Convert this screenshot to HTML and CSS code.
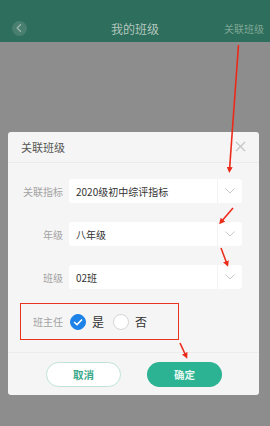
FILE: index.html
```html
<!DOCTYPE html>
<html lang="zh-CN">
<head>
    <meta charset="UTF-8">
    <meta name="viewport" content="width=device-width, initial-scale=1.0">
    <title>我的班级</title>
    <link rel="stylesheet" href="styles.css">
</head>
<body>
    <div class="page">
        <!-- Top bar -->
        <div class="topbar">
            <div class="back">
                <svg width="16" height="16" viewBox="0 0 16 16"><path d="M9.5 4 L5.5 8 L9.5 12" fill="none" stroke="#9fb8ad" stroke-width="1.3"/></svg>
            </div>
            <div class="topbar-title">我的班级</div>
            <div class="topbar-link">关联班级</div>
        </div>

        <!-- Dialog -->
        <div class="dialog">
            <div class="dialog-head">
                <span class="dialog-title">关联班级</span>
                <svg class="close" width="11" height="11" viewBox="0 0 11 11"><path d="M1 1 L10 10 M10 1 L1 10" stroke="#c4c4c4" stroke-width="1.2"/></svg>
            </div>
            <div class="dialog-body">
                <div class="form-row">
                    <label>关联指标</label>
                    <div class="select">
                        <span class="select-text">2020级初中综评指标</span>
                        <span class="select-arrow"><svg width="10" height="6" viewBox="0 0 10 6"><path d="M0.5 0.5 L5 5 L9.5 0.5" fill="none" stroke="#c8c8c8" stroke-width="1"/></svg></span>
                    </div>
                </div>
                <div class="form-row">
                    <label>年级</label>
                    <div class="select">
                        <span class="select-text">八年级</span>
                        <span class="select-arrow"><svg width="10" height="6" viewBox="0 0 10 6"><path d="M0.5 0.5 L5 5 L9.5 0.5" fill="none" stroke="#c8c8c8" stroke-width="1"/></svg></span>
                    </div>
                </div>
                <div class="form-row">
                    <label>班级</label>
                    <div class="select">
                        <span class="select-text">02班</span>
                        <span class="select-arrow"><svg width="10" height="6" viewBox="0 0 10 6"><path d="M0.5 0.5 L5 5 L9.5 0.5" fill="none" stroke="#c8c8c8" stroke-width="1"/></svg></span>
                    </div>
                </div>
                <div class="radio-row">
                    <span class="radio-label">班主任</span>
                    <span class="radio checked">
                        <svg width="10" height="8" viewBox="0 0 10 8"><path d="M1 4 L4 6.6 L9 1.4" fill="none" stroke="#fff" stroke-width="1.5"/></svg>
                    </span>
                    <span class="radio-text">是</span>
                    <span class="radio"></span>
                    <span class="radio-text">否</span>
                </div>
            </div>
            <div class="dialog-foot">
                <button class="btn btn-cancel">取消</button>
                <button class="btn btn-ok">确定</button>
            </div>
        </div>

        <!-- Annotation arrows -->
        <svg class="marks" width="270" height="426" viewBox="0 0 270 426">
            <defs>
                <marker id="head" markerWidth="6" markerHeight="6" refX="3" refY="3" orient="auto" markerUnits="userSpaceOnUse">
                    <path d="M0 0 L6 3 L0 6 Z" fill="#ec2a1a"/>
                </marker>
            </defs>
            <g stroke="#ec2a1a" stroke-width="1.6" fill="none" marker-end="url(#head)">
                <line x1="238.5" y1="45" x2="229.5" y2="170"/>
                <line x1="233" y1="208" x2="221" y2="222"/>
                <line x1="221" y1="248" x2="227" y2="264"/>
                <line x1="180" y1="343" x2="186" y2="356"/>
            </g>
        </svg>
    </div>
</body>
</html>
```

FILE: styles.css
```css
* {
    margin: 0;
    padding: 0;
    box-sizing: border-box;
    font-family: "Noto Sans CJK SC", "Noto Sans", sans-serif;
}

body {
    background-color: #8d8d8d;
    width: 270px;
    height: 426px;
    overflow: hidden;
}

.page {
    position: relative;
    width: 270px;
    height: 426px;
}

.topbar {
    height: 42px;
    background-color: #2e6e5c;
    display: flex;
    align-items: center;
    padding: 14px 6px 0 12px;
    position: relative;
}

.back {
    width: 15px;
    height: 15px;
    border-radius: 50%;
    background-color: #487f6f;
    display: flex;
    align-items: center;
    justify-content: center;
}

.topbar-title {
    position: absolute;
    left: 0;
    right: 0;
    top: 20px;
    text-align: center;
    font-size: 12px;
    color: #b3c6bf;
    line-height: 18px;
}

.topbar-link {
    margin-left: auto;
    font-size: 10px;
    color: #7ea696;
}

.dialog {
    margin: 90px 11px 0 8px;
    height: 263px;
    background-color: #f5f5f5;
    border-radius: 3px;
}

.dialog-head {
    height: 31px;
    display: flex;
    align-items: center;
    justify-content: space-between;
    padding: 0 13px 0 13px;
    border-bottom: 1px solid #ebebeb;
}

.dialog-title {
    font-size: 11px;
    color: #555;
}

.close {
    margin-top: -2px;
}

.dialog-body {
    padding: 16px 17px 0 0;
}

.form-row {
    display: flex;
    align-items: center;
    margin-bottom: 19px;
}

.form-row label {
    width: 55px;
    text-align: right;
    font-size: 10px;
    color: #a3a3a3;
    margin-right: 6px;
}

.select {
    flex: 1;
    height: 24px;
    background-color: #fff;
    border-radius: 3px;
    display: flex;
    align-items: center;
}

.select-text {
    flex: 1;
    padding-left: 7px;
    font-size: 10px;
    color: #333;
}

.select-arrow {
    width: 25px;
    height: 24px;
    border-left: 1px solid #f2f2f2;
    display: flex;
    align-items: center;
    justify-content: center;
}

.radio-row {
    margin: -5px 0 0 12px;
    width: 159px;
    height: 37px;
    border: 1.5px solid #e8331f;
    display: flex;
    align-items: center;
    padding-left: 12px;
}

.radio-label {
    font-size: 10px;
    color: #a3a3a3;
    margin-right: 7px;
}

.radio {
    width: 16px;
    height: 16px;
    border-radius: 50%;
    border: 1px solid #d6d6d6;
    background-color: #fff;
    display: flex;
    align-items: center;
    justify-content: center;
}

.radio.checked {
    background-color: #1e83e8;
    border-color: #1e83e8;
}

.radio-text {
    font-size: 12px;
    color: #333;
    margin: 0 9px 0 6px;
}

.dialog-foot {
    margin-top: 12px;
    border-top: 1px solid #ececec;
    display: flex;
    padding: 9px 0 0 38px;
    gap: 26px;
}

.btn {
    width: 75px;
    height: 25px;
    border-radius: 13px;
    font-size: 10.5px;
    font-weight: bold;
    cursor: pointer;
}

.btn-cancel {
    background-color: #fff;
    border: 1px solid #bfe3d7;
    color: #3aa889;
}

.btn-ok {
    background-color: #2bb393;
    border: none;
    color: #e8f7f2;
}

.marks {
    position: absolute;
    left: 0;
    top: 0;
    pointer-events: none;
}
```
